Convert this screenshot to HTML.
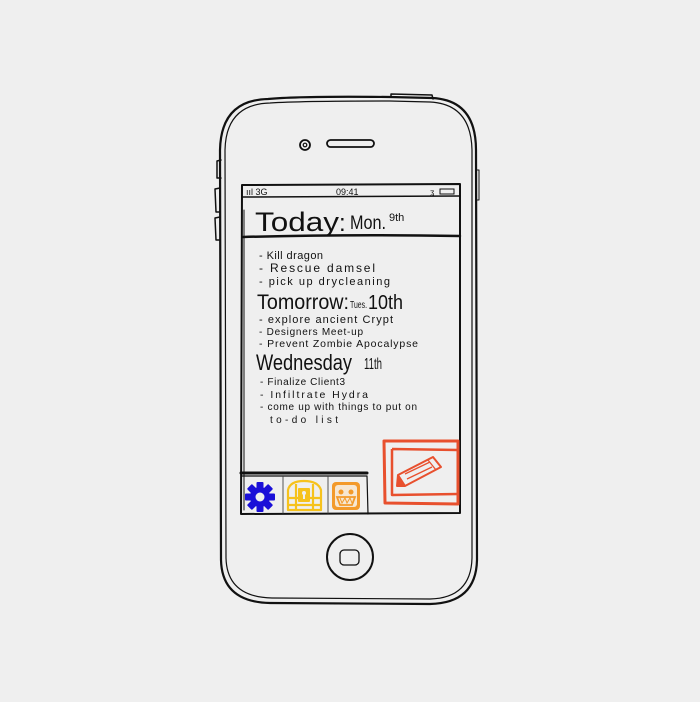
<!DOCTYPE html>
<html><head><meta charset="utf-8"><style>
html,body{margin:0;padding:0;background:#efefef;}
svg{display:block}
text{font-family:"Liberation Sans",sans-serif;fill:#111}
</style></head><body>
<svg width="700" height="702" viewBox="0 0 700 702" xmlns="http://www.w3.org/2000/svg">
<rect width="700" height="702" fill="#efefef"/>
<g fill="none" stroke="#111" stroke-linecap="round" stroke-linejoin="round">
<path d="M268 99 Q300 96 390 97 L432 98 Q476 100 476 150 L477 560 Q476 603 430 604 L270 603 Q222 602 221 560 L220 150 Q221 100 268 99 Z" stroke-width="2.2"/>
<path d="M270 103 Q300 101 390 101 L430 102 Q471 104 472 150 L472 558 Q471 598 430 599 L272 598 Q227 597 226 558 L225 150 Q226 104 270 103 Z" stroke-width="1.2"/>
<path d="M391 97 L391 94 L432 95 L433 99" stroke-width="1.5"/>
<path d="M221 160 L217 161 L217 178 L221 178 M220 188 L215 189 L216 212 L220 212 M220 217 L215 218 L216 240 L220 240" stroke-width="1.5"/>
<path d="M477 170 L479 170 L479 200 L477 200" stroke-width="1"/>
<circle cx="305" cy="145" r="5" stroke-width="1.8"/><circle cx="305" cy="145" r="1.8" stroke-width="1.2"/>
<rect x="327" y="140" width="47" height="7" rx="3.5" stroke-width="1.8"/>
<path d="M242 185 L460 184 L460 513 L241 514 Z" stroke-width="2"/>
<path d="M242 197 L460 196" stroke-width="1.5"/>
<path d="M243 237 Q350 234 460 236" stroke-width="2.5"/>
<path d="M244 210 L244 510" stroke-width="1"/>
<path d="M241 473 L367 473" stroke-width="3"/>
<path d="M241 476 L367 476 L368 514" stroke-width="1.2"/>
<path d="M283 477 L283 513 M328 477 L328 513" stroke-width="1" stroke="#555"/>
<circle cx="350" cy="557" r="23" stroke-width="2"/>
<rect x="340" y="550" width="19" height="15" rx="4" stroke-width="1.3"/>
</g>
<text x="246" y="195" font-size="9">ııl 3G</text>
<text x="336" y="195" font-size="9">09:41</text>
<text x="430" y="195" font-size="8">ʓ</text>
<rect x="440" y="189" width="14" height="5" fill="none" stroke="#111" stroke-width="1"/>
<text x="255" y="231" font-size="27" textLength="84" lengthAdjust="spacingAndGlyphs">Today</text>
<text x="339" y="231" font-size="24">:</text>
<text x="350" y="229" font-size="19" textLength="36" lengthAdjust="spacingAndGlyphs">Mon.</text>
<text x="389" y="221" font-size="11">9th</text>
<g font-size="11">
<text x="259" y="259" textLength="64">- Kill dragon</text>
<text x="259" y="272" font-size="12" textLength="116">- Rescue damsel</text>
<text x="259" y="285" textLength="131">- pick up drycleaning</text>
</g>
<text x="257" y="309" font-size="21" textLength="92" lengthAdjust="spacingAndGlyphs">Tomorrow:</text>
<text x="350" y="308" font-size="10" textLength="17" lengthAdjust="spacingAndGlyphs">Tues.</text>
<text x="368" y="309" font-size="20" textLength="35" lengthAdjust="spacingAndGlyphs">10th</text>
<g font-size="11">
<text x="259" y="323" textLength="134">- explore ancient Crypt</text>
<text x="259" y="335" font-size="10" textLength="104">- Designers Meet-up</text>
<text x="259" y="347" font-size="10.5" textLength="159">- Prevent Zombie Apocalypse</text>
</g>
<text x="256" y="370" font-size="22" textLength="96" lengthAdjust="spacingAndGlyphs">Wednesday</text>
<text x="364" y="369" font-size="16" textLength="18" lengthAdjust="spacingAndGlyphs">11th</text>
<g font-size="10">
<text x="260" y="385" textLength="85">- Finalize Client3</text>
<text x="260" y="398" font-size="10.5" textLength="108">- Infiltrate Hydra</text>
<text x="260" y="410" textLength="157">- come up with things to put on</text>
<text x="270" y="423" textLength="68">to-do list</text>
</g>
<g fill="none" stroke="#e8502e" stroke-linejoin="round">
<path d="M384 441 L458 441 L458 504 L385 503 Z" stroke-width="3"/>
<path d="M392 449 L458 450 M458 494 L392 495 L392 449" stroke-width="2.5"/>
<path d="M398 475 L433 457 L441 467 L405 486 Z" stroke-width="2"/>
<path d="M398 475 L397 486 L405 486" stroke-width="2" fill="#e8502e"/>
<path d="M428 460 L436 470 M405 474 L430 462 M407 479 L432 467" stroke-width="1.3"/>
</g>
<g transform="translate(260 497)" fill="#1a0fd8">
<circle r="10"/>
<rect x="-3.5" y="-15" width="7" height="30" rx="1"/>
<rect x="-3.5" y="-15" width="7" height="30" rx="1" transform="rotate(45)"/>
<rect x="-3.5" y="-15" width="7" height="30" rx="1" transform="rotate(90)"/>
<rect x="-3.5" y="-15" width="7" height="30" rx="1" transform="rotate(135)"/>
<circle r="4.5" fill="#efefef"/>
</g>
<g fill="none" stroke="#f6c21c" stroke-width="2.2" stroke-linejoin="round">
<path d="M288 510 L288 490 Q290 481 304 481 Q318 481 321 490 L321 510 Z"/>
<path d="M288 498 L321 498 M296 484 L296 510 M313 484 L313 510 M288 505 L321 505"/>
</g>
<rect x="298" y="488" width="12" height="14" fill="#f6c21c" rx="1"/>
<circle cx="304" cy="493" r="2" fill="#efefef"/><rect x="303" y="494" width="2" height="5" fill="#efefef"/>
<rect x="332" y="482" width="28" height="28" rx="4" fill="#f39a2b"/>
<rect x="335" y="485" width="22" height="22" rx="3" fill="#f6e7d3"/>
<circle cx="341" cy="492" r="2.5" fill="#f39a2b"/><circle cx="351" cy="492" r="2.5" fill="#f39a2b"/>
<path d="M337 497 L355 497 L352 505 L340 505 Z" fill="none" stroke="#f39a2b" stroke-width="1.8"/>
<path d="M340 498 L342 503 L345 498 L347 503 L350 498 L352 503" fill="none" stroke="#f39a2b" stroke-width="1"/>
</svg>
</body></html>
